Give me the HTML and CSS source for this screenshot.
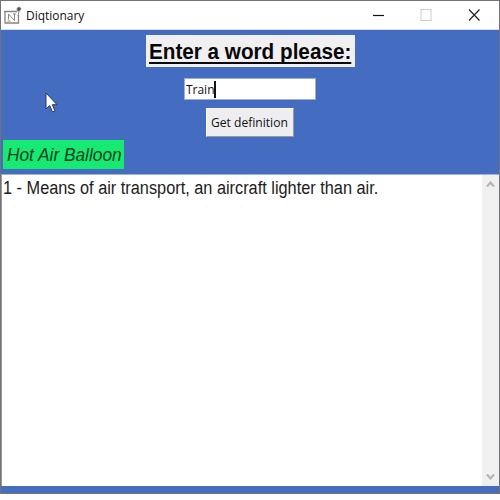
FILE: index.html
```html
<!DOCTYPE html>
<html lang="en">
<head>
<meta charset="utf-8">
<title>Diqtionary</title>
<link rel="stylesheet" href="styles.css">
</head>
<body>
<div class="window">
  <header class="titlebar">
    <svg class="app-icon" width="18" height="18" viewBox="0 0 18 18" fill="none" stroke="#858585">
      <path d="M0 5.500H13M14.500 9V17H1V5" stroke-width="1.3"/>
      <path d="M4.500 13.500V8L10.500 14.500V8M3.500 15H6.500M9 8H12" stroke="#888"/>
      <path d="M13 2.500L15 1L17 2.500L15.500 5L13.500 5Z" fill="#555" stroke="#777"/>
      <path d="M15 5.500L14 10"/>
    </svg>
    <span class="title"><span class="fit">Diqtionary</span></span>
    <div class="controls">
      <svg width="48" height="28" viewBox="0 0 48 28"><path d="M18 14.500H29" stroke="#111" stroke-width="1.2"/></svg>
      <svg width="48" height="28" viewBox="0 0 48 28"><rect x="18" y="8.500" width="10" height="11" fill="none" stroke="#ccc"/></svg>
      <svg width="48" height="28" viewBox="0 0 48 28"><path d="M18 8.500L28.500 19.500M28.500 8.500L18 19.500" stroke="#222" stroke-width="1.2"/></svg>
    </div>
  </header>
  <main class="content">
    <h1 class="prompt"><span class="fit">Enter a word please:</span></h1>
    <div class="entry"><span class="fit">Train</span><i class="caret"></i></div>
    <button class="submit"><span class="fit">Get definition</span></button>
    <div class="word"><span class="fit">Hot Air Balloon</span></div>
    <div class="result">
      <p class="definition"><span class="fit">1 - Means of air transport, an aircraft lighter than air.</span></p>
      <div class="scrollbar">
        <svg width="17" height="18" viewBox="0 0 17 18"><path d="M5 11.500L8.500 7.500L12 11.500" fill="none" stroke="#b2b2b2" stroke-width="2"/></svg>
        <svg width="17" height="18" viewBox="0 0 17 18"><path d="M5 6.500L8.500 10.500L12 6.500" fill="none" stroke="#b2b2b2" stroke-width="2"/></svg>
      </div>
    </div>
  </main>
  <svg class="pointer" width="14" height="22" viewBox="0 0 14 22"><path d="M1 1V17L4.700 13.500L7.500 20L10 19L7.300 12.700H12Z" fill="#fff" stroke="#263969"/></svg>
</div>
</body>
</html>
```
FILE: styles.css
```css
* { box-sizing: border-box; }
body { margin: 0; width: 500px; height: 500px; overflow: hidden; background: #fdfdfd; }
.window {
  position: relative;
  display: flex;
  flex-direction: column;
  width: 500px;
  height: 494px;
  border: 1px solid #727277;
  background: #446dc2;
}
.fit { display: inline-block; white-space: nowrap; transform-origin: 0 50%; }
.titlebar { display: flex; height: 29px; padding-left: 3px; background: #fff; border-bottom: 1px solid #d5ddec; }
.app-icon { margin-top: 5px; }
.title { flex: 1; padding-left: 4px; font: 13px/28px "Open Sans", sans-serif; color: #111; }
.title .fit { transform: scaleX(.92); }
.controls { display: flex; }
.content { flex: 1; display: flex; flex-direction: column; align-items: center; }
.prompt {
  width: 209px;
  height: 32px;
  margin: 5px 0 11px;
  padding-left: 3px;
  background: #f0f0f2;
  font: bold 22px/34px "Liberation Sans", sans-serif;
  color: #080808;
}
.prompt .fit {
  transform: scaleX(.94);
  text-decoration: underline;
  text-decoration-thickness: 2px;
  text-underline-offset: 3px;
  text-decoration-skip-ink: none;
}
.entry {
  position: relative;
  width: 132px;
  height: 22px;
  padding-left: 1px;
  border: 1px solid #9eaed0;
  background: #fff;
  font: 13px/21px "Open Sans", sans-serif;
  color: #111;
}
.entry .fit { transform: scaleX(.92); }
.caret { position: absolute; left: 29px; top: 2px; width: 2px; height: 17px; background: #111; }
.submit {
  width: 88px;
  height: 29px;
  margin: 8px 0 3px;
  padding: 0 0 0 4px;
  border: 1px solid #f7f7f7;
  border-right-color: #999;
  border-bottom-color: #999;
  background: #eeeef0;
  font: 13px/27px "Open Sans", sans-serif;
  text-align: left;
  color: #111;
}
.submit .fit { transform: scaleX(.93); }
.word {
  align-self: flex-start;
  width: 121px;
  height: 29px;
  margin-left: 2px;
  padding-left: 4px;
  background: #16ea73;
  font: italic 18px/31px "Liberation Sans", sans-serif;
  color: #07421f;
}
.word .fit { transform: scaleX(.96); }
.result {
  display: flex;
  justify-content: space-between;
  align-self: stretch;
  height: 312px;
  margin-top: 5px;
  border-left: 1px solid #999;
  border-top: 1px solid #a4b1cf;
  background: #fff;
}
.definition { width: 380px; margin: 0; padding-left: 1px; font: 18px/26px "Liberation Sans", sans-serif; color: #1c1c1c; }
.definition .fit { transform: scaleX(.906); }
.scrollbar { display: flex; flex-direction: column; justify-content: space-between; width: 17px; background: #f0f0f0; }
.pointer { position: absolute; left: 44px; top: 91px; }
```
